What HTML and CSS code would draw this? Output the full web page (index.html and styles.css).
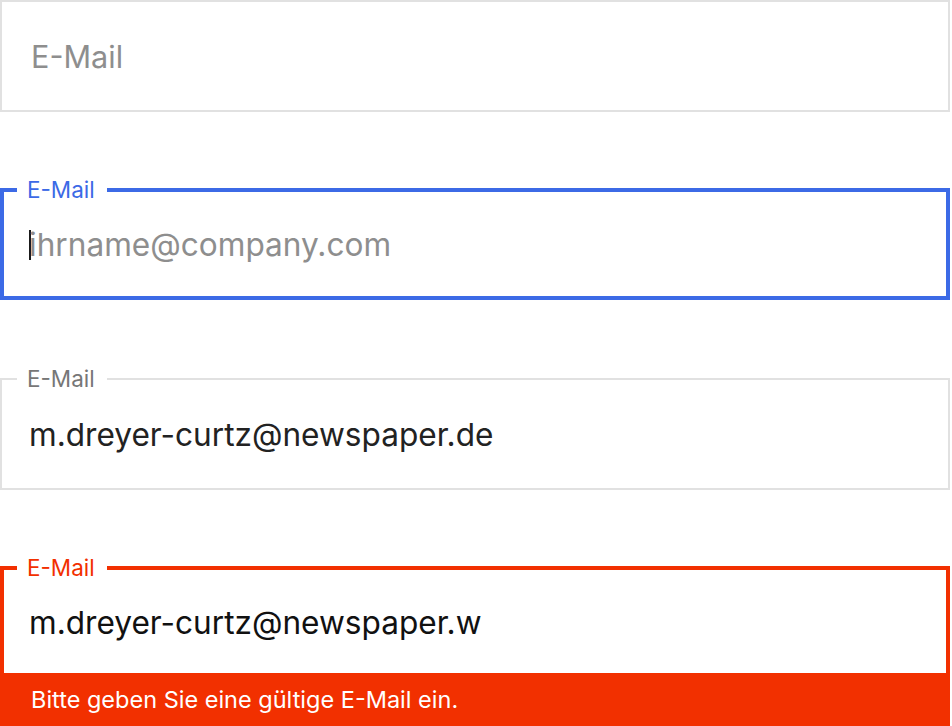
FILE: index.html
```html
<!DOCTYPE html>
<html lang="de">
<head>
<meta charset="utf-8">
<title>E-Mail Felder</title>
<link rel="stylesheet" href="styles.css">
</head>
<body>
<main class="stack">
  <div class="field field-plain">
    <span class="value placeholder plain-text">E-Mail</span>
  </div>

  <fieldset class="field field-focus">
    <legend class="label">E-Mail</legend>
    <div class="inner">
      <span class="caret"></span><span class="value placeholder">ihrname@company.com</span>
    </div>
  </fieldset>

  <fieldset class="field field-filled">
    <legend class="label">E-Mail</legend>
    <div class="inner">
      <span class="value">m.dreyer-curtz@newspaper.de</span>
    </div>
  </fieldset>

  <fieldset class="field field-error">
    <legend class="label">E-Mail</legend>
    <div class="inner">
      <span class="value">m.dreyer-curtz@newspaper.w</span>
    </div>
    <div class="error">Bitte geben Sie eine gültige E-Mail ein.</div>
  </fieldset>
</main>
</body>
</html>
```

FILE: styles.css
```css
* { box-sizing: border-box; }

html, body {
  margin: 0;
  padding: 0;
  background: #ffffff;
}

body {
  font-family: Inter, "Noto Sans", sans-serif;
  width: 950px;
  height: 726px;
  overflow: hidden;
}

.stack {
  display: flex;
  flex-direction: column;
  gap: 66px;
}

.field {
  margin: 0;
  padding: 0;
  min-width: 0;
}

.field-plain {
  height: 112px;
  border: 2px solid #e1e1e1;
  display: flex;
  align-items: center;
  padding: 2px 0 0 29px;
}

.label {
  font-size: 22.5px;
  line-height: 24px;
  padding: 0 12px 0 10px;
  margin-left: 13px;
}

.inner {
  display: flex;
  align-items: center;
  padding-top: 2px;
}

.value {
  font-size: 31.6px;
  line-height: 38px;
  color: #1c1c1c;
  white-space: nowrap;
}

.plain-text {
  font-size: 30.6px;
}

.placeholder {
  color: #8e8e8e;
}

.caret {
  width: 2px;
  height: 30px;
  background: #1a1a1a;
  margin-right: -2px;
}

.field-focus {
  border: 4px solid #3c6ae6;
}
.field-focus .label { color: #3c6ae6; }
.field-focus .inner {
  height: 104px;
  margin-top: -10px;
  padding-left: 25px;
}

.field-filled {
  border: 2px solid #e1e1e1;
  margin-top: 1px;
}
.field-filled .label {
  color: #777777;
  margin-left: 15px;
}
.field-filled .inner {
  height: 108px;
  margin-top: -11px;
  padding-left: 27px;
}
.field-filled .value { color: #222222; }

.field-error {
  border: 4px solid #f23000;
  border-bottom: 0;
}
.field-error .label { color: #f23000; }
.field-error .inner {
  height: 103px;
  margin-top: -10px;
  padding-left: 25px;
}
.field-error .value { color: #111111; }

.error {
  background: #f23000;
  color: #ffffff;
  font-size: 23.5px;
  height: 56px;
  line-height: 54px;
  margin: 0 -4px;
  padding-left: 31px;
}
```
